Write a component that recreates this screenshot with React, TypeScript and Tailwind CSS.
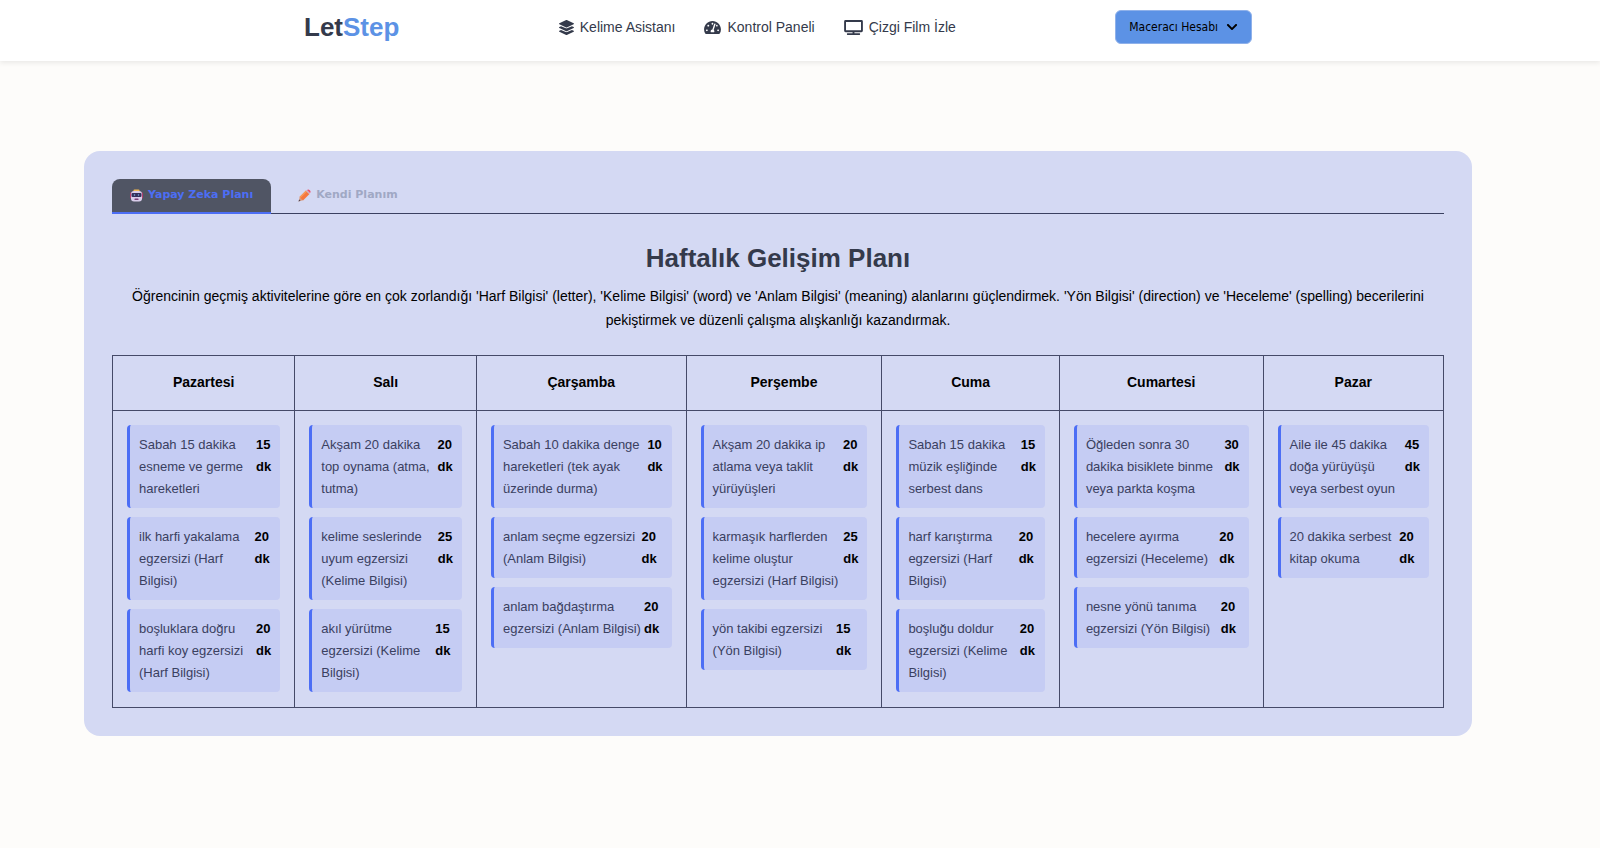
import { FaLayerGroup, FaTachometerAlt, FaChevronDown, FaTv } from "react-icons/fa";

type Task = { text: string; minutes: number };
type Day = { name: string; tasks: Task[] };

const days: Day[] = [
  {
    name: "Pazartesi",
    tasks: [
      { text: "Sabah 15 dakika esneme ve germe hareketleri", minutes: 15 },
      { text: "ilk harfi yakalama egzersizi (Harf Bilgisi)", minutes: 20 },
      { text: "boşluklara doğru harfi koy egzersizi (Harf Bilgisi)", minutes: 20 },
    ],
  },
  {
    name: "Salı",
    tasks: [
      { text: "Akşam 20 dakika top oynama (atma, tutma)", minutes: 20 },
      { text: "kelime seslerinde uyum egzersizi (Kelime Bilgisi)", minutes: 25 },
      { text: "akıl yürütme egzersizi (Kelime Bilgisi)", minutes: 15 },
    ],
  },
  {
    name: "Çarşamba",
    tasks: [
      { text: "Sabah 10 dakika denge hareketleri (tek ayak üzerinde durma)", minutes: 10 },
      { text: "anlam seçme egzersizi (Anlam Bilgisi)", minutes: 20 },
      { text: "anlam bağdaştırma egzersizi (Anlam Bilgisi)", minutes: 20 },
    ],
  },
  {
    name: "Perşembe",
    tasks: [
      { text: "Akşam 20 dakika ip atlama veya taklit yürüyüşleri", minutes: 20 },
      { text: "karmaşık harflerden kelime oluştur egzersizi (Harf Bilgisi)", minutes: 25 },
      { text: "yön takibi egzersizi (Yön Bilgisi)", minutes: 15 },
    ],
  },
  {
    name: "Cuma",
    tasks: [
      { text: "Sabah 15 dakika müzik eşliğinde serbest dans", minutes: 15 },
      { text: "harf karıştırma egzersizi (Harf Bilgisi)", minutes: 20 },
      { text: "boşluğu doldur egzersizi (Kelime Bilgisi)", minutes: 20 },
    ],
  },
  {
    name: "Cumartesi",
    tasks: [
      { text: "Öğleden sonra 30 dakika bisiklete binme veya parkta koşma", minutes: 30 },
      { text: "hecelere ayırma egzersizi (Heceleme)", minutes: 20 },
      { text: "nesne yönü tanıma egzersizi (Yön Bilgisi)", minutes: 20 },
    ],
  },
  {
    name: "Pazar",
    tasks: [
      { text: "Aile ile 45 dakika doğa yürüyüşü veya serbest oyun", minutes: 45 },
      { text: "20 dakika serbest kitap okuma", minutes: 20 },
    ],
  },
];

function RobotIcon() {
  return (
    <svg viewBox="0 0 26 26" className="size-[13px]" aria-hidden="true">
      <rect x="7" y="1" width="12" height="6" rx="2" fill="#f2b950" />
      <rect x="0" y="7" width="5" height="12" rx="2" fill="#b5406f" />
      <rect x="21" y="7" width="5" height="12" rx="2" fill="#b5406f" />
      <rect x="2" y="4" width="22" height="21" rx="6" fill="#d9cdea" />
      <rect x="3" y="8" width="20" height="8" rx="2" fill="#35315c" />
      <circle cx="9" cy="12" r="1.500" fill="#7fb0e5" />
      <circle cx="17" cy="12" r="1.500" fill="#7fb0e5" />
      <rect x="9" y="19" width="8" height="3" rx="1" fill="#7b3f78" />
    </svg>
  );
}

function PencilIcon() {
  return (
    <svg viewBox="0 0 26 26" className="size-[13px]" aria-hidden="true">
      <path d="M1 25l3-10 7 7z" fill="#d99a7c" />
      <path d="M1 25l1.300-4 2.700 2.700z" fill="#4a4452" />
      <path d="M3 16L16 3l7 7-13 13z" fill="#f5773f" />
      <path d="M3 16L16 3l2 2L5 18z" fill="#f79a5b" />
      <path d="M16 4l2-2 6 6-2 2z" fill="#c9b5c4" />
      <path d="M18 2c2-2 4-1 5.500.5S26 6 24 8z" fill="#ee4f6b" />
    </svg>
  );
}

export default function App() {
  return (
    <div className="min-h-screen bg-[#fdfcfa] font-['Liberation_Sans',Arial,sans-serif] text-base text-black">
      <header className="h-[61px] bg-white pr-11 shadow-[0_2px_5px_rgba(0,0,0,0.08)]">
        <div className="mx-auto flex h-[54px] max-w-[948px] items-center justify-between">
          <a href="#" className="text-[26px] font-bold text-[#343a4b]">
            Let<span className="text-[#5c92e5]">Step</span>
          </a>
          <nav className="flex gap-[29px] text-sm text-[#343a4b]">
            <a href="#" className="flex items-center gap-1.5">
              <FaLayerGroup className="h-[15px] w-[15px]" />
              Kelime Asistanı
            </a>
            <a href="#" className="flex items-center gap-1.5">
              <FaTachometerAlt className="h-[15px] w-[17px]" />
              Kontrol Paneli
            </a>
            <a href="#" className="flex items-center gap-1.5">
              <FaTv className="h-[15px] w-[19px]" />
              Çizgi Film İzle
            </a>
          </nav>
          <button className="flex h-[34px] items-center gap-2 rounded-md border border-[#8fb1ea] bg-[#5c92e5] px-[13px] font-['DejaVu_Sans_Condensed','DejaVu_Sans',sans-serif] text-xs">
            Maceracı Hesabı
            <FaChevronDown />
          </button>
        </div>
      </header>
      <main className="mr-32 ml-[84px] pt-[90px]">
        <section className="rounded-2xl bg-[#d4d9f3] p-7">
          <div className="flex gap-[9px] border-b border-[#3a4060]" role="tablist">
            <button
              role="tab"
              aria-selected="true"
              className="-mb-px flex h-[35px] items-center gap-[5px] rounded-t-lg border-b-2 border-[#4c6ef5] bg-[#505564] px-[18px] font-['DejaVu_Sans',Verdana,sans-serif] text-[11px] font-bold text-[#4c6ef5]"
            >
              <RobotIcon />
              Yapay Zeka Planı
            </button>
            <button
              role="tab"
              aria-selected="false"
              className="-mb-px flex h-[35px] items-center gap-[5px] border-b-2 border-transparent px-[18px] font-['DejaVu_Sans',Verdana,sans-serif] text-[11px] font-bold text-[#a0a8c4]"
            >
              <PencilIcon />
              Kendi Planım
            </button>
          </div>
          <h1 className="mt-7 text-center text-[26px] leading-8 font-bold text-[#343a4b]">Haftalık Gelişim Planı</h1>
          <p className="mt-2.5 text-center text-sm leading-6">
            Öğrencinin geçmiş aktivitelerine göre en çok zorlandığı 'Harf Bilgisi' (letter), 'Kelime Bilgisi' (word) ve
            'Anlam Bilgisi' (meaning) alanlarını güçlendirmek. 'Yön Bilgisi' (direction) ve 'Heceleme' (spelling)
            becerilerini pekiştirmek ve düzenli çalışma alışkanlığı kazandırmak.
          </p>
          <table className="mt-[23px] w-full border-collapse">
            <thead>
              <tr>
                {days.map((d) => (
                  <th key={d.name} scope="col" className="border border-[#454a68] px-3.5 pt-3.5 pb-4 text-sm leading-6">
                    {d.name}
                  </th>
                ))}
              </tr>
            </thead>
            <tbody>
              <tr>
                {days.map((d) => (
                  <td key={d.name} className="border border-[#454a68] px-3.5 pt-3.5 pb-[15px] align-top">
                    <ul className="flex flex-col gap-[9px]">
                      {d.tasks.map((t) => (
                        <li
                          key={t.text}
                          className="flex justify-between rounded-sm border-l-3 border-[#4c6ef5] bg-[#c5ccf3] px-[9px] pt-[9px] pb-2 text-[13px] leading-[22px]"
                        >
                          <span className="text-[#3a4060]">{t.text}</span>
                          <strong>{t.minutes} dk</strong>
                        </li>
                      ))}
                    </ul>
                  </td>
                ))}
              </tr>
            </tbody>
          </table>
        </section>
      </main>
    </div>
  );
}
